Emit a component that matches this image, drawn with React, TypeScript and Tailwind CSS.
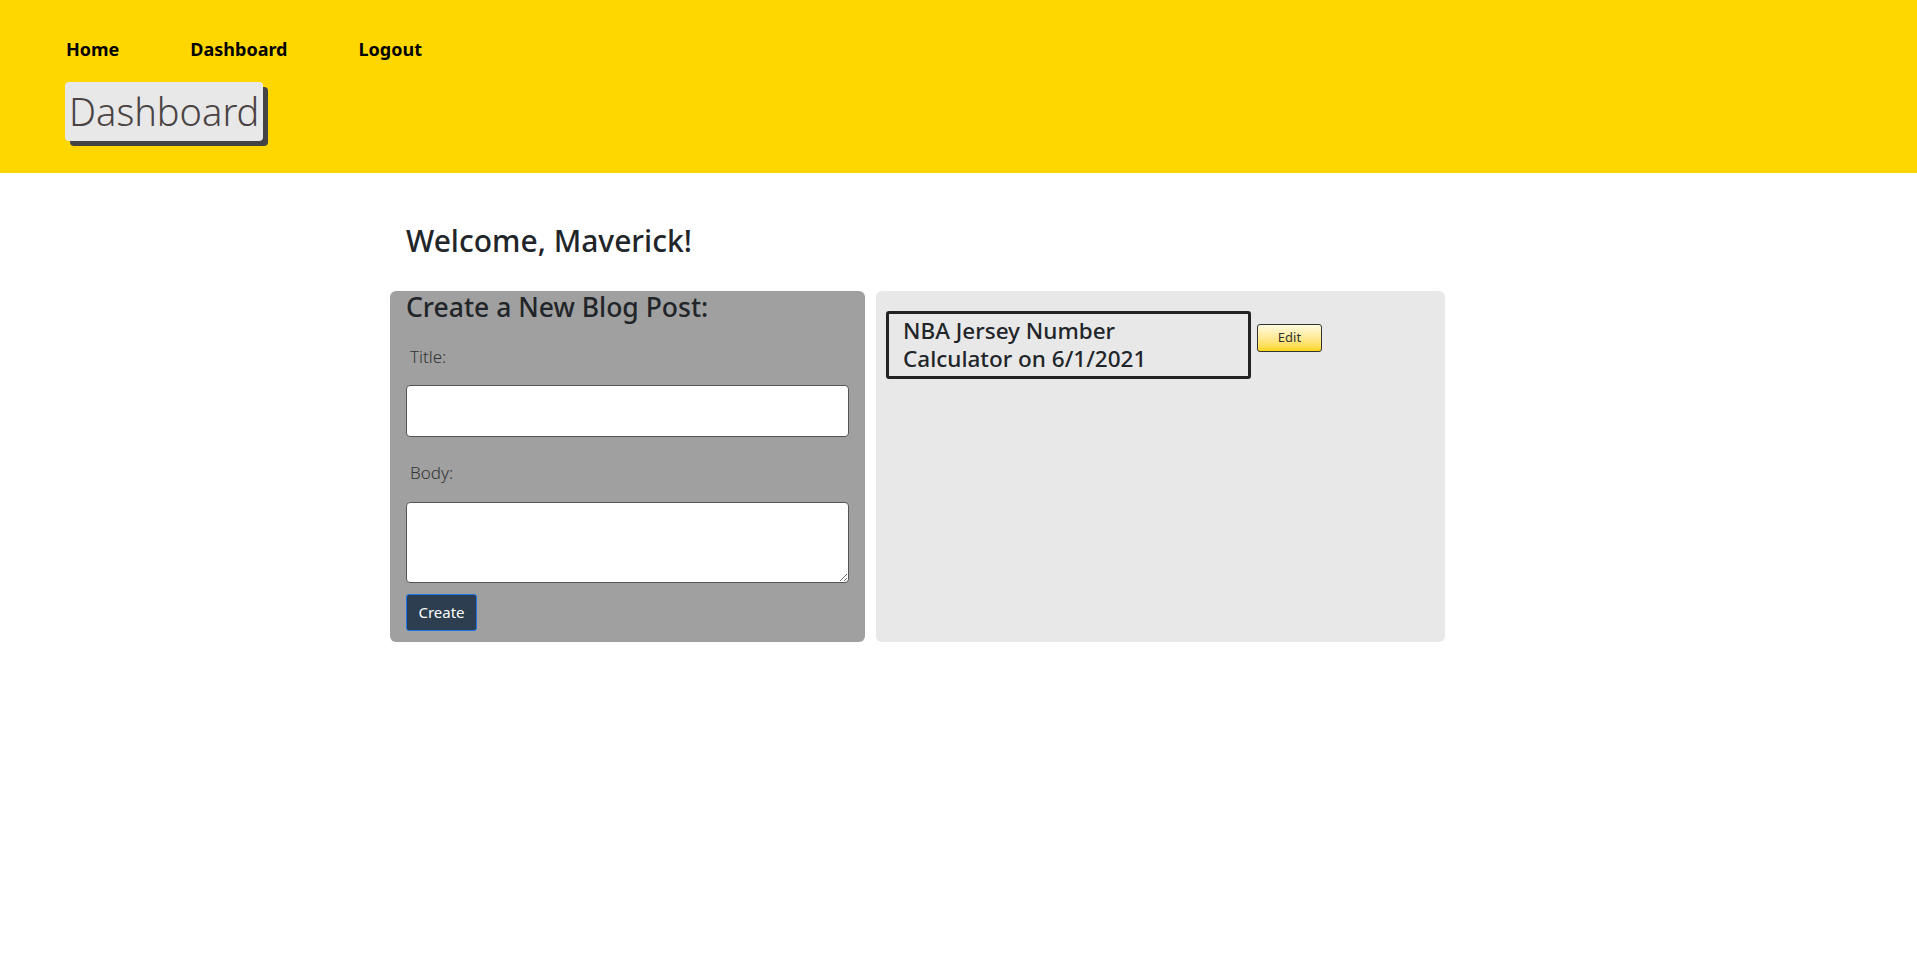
import React from "react"

const font = { fontFamily: '"Noto Sans", "Open Sans", sans-serif' }

export default function App() {
  return (
    <div className="min-h-[964px] bg-white text-[#212529]" style={font}>
      {/* Header */}
      <header className="h-[173px] bg-[#ffd700] pl-[66px] pt-[37px]">
        <nav className="flex gap-[71px] text-[18px] font-bold leading-[24px] text-black">
          <a href="#">Home</a>
          <a href="#">Dashboard</a>
          <a href="#">Logout</a>
        </nav>
        <h1 className="mt-[21px] ml-[-1px] inline-block rounded-[4px] bg-[#e8e8e8] px-[4px] text-[38px] font-light leading-[59px] text-[#4a4343] shadow-[5px_5px_0_#444]">
          Dashboard
        </h1>
      </header>

      {/* Main */}
      <main className="ml-[390px] w-[1055px] pt-[49px]">
        <h2 className="px-[16px] text-[30px] font-medium leading-[38px]">Welcome, Maverick!</h2>

        <div className="mt-[31px] flex gap-[11px]">
          {/* New post form */}
          <section className="flex h-[351px] w-[475px] flex-col rounded-[6px] bg-[#a0a0a0] px-[16px]">
            <h3 className="text-[26.5px] font-medium leading-[32px]">Create a New Blog Post:</h3>
            <label className="mt-[22px] pl-[4px] text-[17px] font-light leading-[24px] text-[#333]">Title:</label>
            <input className="mt-[16px] h-[52px] w-[443px] rounded-[4px] border border-[#555] bg-white" />
            <label className="mt-[24px] pl-[4px] text-[17px] font-light leading-[24px] text-[#333]">Body:</label>
            <textarea className="mt-[17px] h-[81px] w-[443px] rounded-[4px] border border-[#555] bg-white" />
            <button className="mt-[11px] h-[37px] w-[71px] rounded-[3px] border border-[#1a73e8] bg-[#2c3e50] text-[15px] text-white">
              Create
            </button>
          </section>

          {/* Posts */}
          <section className="h-[351px] w-[570px] rounded-[6px] bg-[#e8e8e8] px-[10px] pt-[20px]">
            <div className="flex items-start gap-[6px]">
              <div className="w-[365px] rounded-[3px] border-[3px] border-[#222] py-[3px] pl-[14px] pr-[60px] text-[22.5px] font-medium leading-[28px] text-[#212529]">
                NBA Jersey Number Calculator on 6/1/2021
              </div>
              <button className="mt-[13px] h-[28px] w-[65px] rounded-[3px] border border-[#333] bg-gradient-to-b from-[#fffbe0] to-[#ffd700] text-[13px] text-[#333]">
                Edit
              </button>
            </div>
          </section>
        </div>
      </main>
    </div>
  )
}
